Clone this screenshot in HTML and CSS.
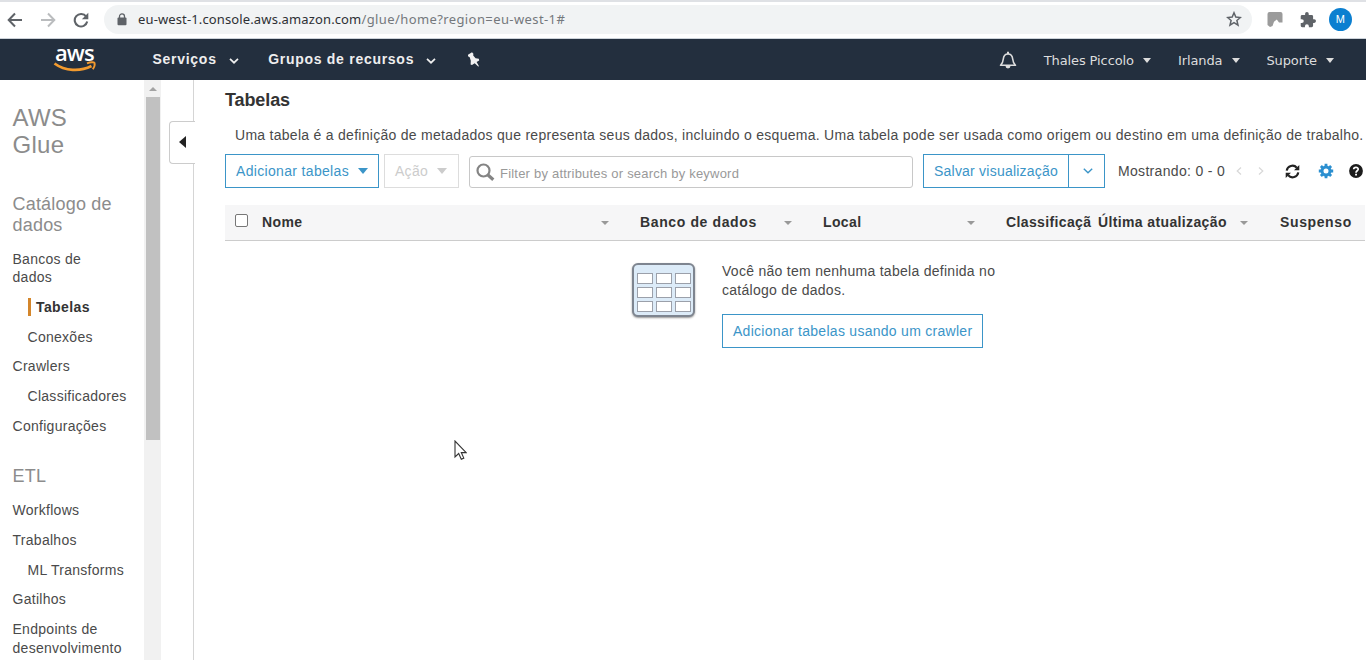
FILE: index.html
```html
<!DOCTYPE html>
<html lang="pt-BR">
<head>
<meta charset="utf-8">
<title>AWS Glue</title>
<link rel="stylesheet" href="styles.css">
</head>
<body>
<div class="chrome">
  <svg class="back" width="16" height="16" viewBox="0 0 16 16" fill="none" stroke="#5f6368" stroke-width="2"><path d="M15 8H2M8 1.5L1.7 8L8 14.5"/></svg>
  <svg class="forward" width="16" height="16" viewBox="0 0 16 16" fill="none" stroke="#babcbe" stroke-width="2"><path d="M1 8h13M8 1.5L14.3 8L8 14.5"/></svg>
  <svg class="reload" width="16" height="16" viewBox="0 0 16 16"><path d="M13.2 4.6A6.3 6.3 0 1 0 14.2 9.6" fill="none" stroke="#5f6368" stroke-width="2.1"/><path d="M15.3 0.8v6.4H8.9z" fill="#5f6368"/></svg>
  <div class="address">
    <svg class="lock" width="10" height="13" viewBox="0 0 10 13"><rect x="0.5" y="4.6" width="9" height="7.6" rx="1" fill="#5f6368"/><path d="M2.5 5V3.4a2.500 2.500 0 0 1 5 0V5" fill="none" stroke="#5f6368" stroke-width="1.300"/></svg>
    <span class="host">eu-west-1.console.aws.amazon.com</span><span class="path">/glue/home?region=eu-west-1#</span>
    <svg class="star" width="16" height="16" viewBox="0 0 16 16" fill="none" stroke="#5f6368" stroke-width="1.500"><path d="M8 1.800l1.800 4.300 4.600.4-3.500 3 1.100 4.600-4-2.400-4 2.400 1.100-4.600-3.500-3 4.600-.4z"/></svg>
  </div>
  <svg class="ext" width="16" height="16" viewBox="0 0 16 16"><path d="M2.500 0h11a2 2 0 0 1 2 2v8.500H12L9.800 7.500 7 9.800 5.500 14 3 15 .5 13V2a2 2 0 0 1 2-2z" fill="#9b9b9b"/></svg>
  <svg class="puzzle" width="16" height="16" viewBox="1 1 22 22"><path d="M20.500 11H19V7a2 2 0 0 0-2-2h-4V3.500a2.500 2.500 0 0 0-5 0V5H4a2 2 0 0 0-2 2v3.800h1.500a2.700 2.700 0 0 1 0 5.400H2V20a2 2 0 0 0 2 2h3.800v-1.500a2.700 2.700 0 0 1 5.400 0V22H17a2 2 0 0 0 2-2v-4h1.500a2.500 2.500 0 0 0 0-5z" fill="#5f6368"/></svg>
  <span class="avatar">M</span>
</div>
<nav class="nav">
  <div class="logo"><span class="logo-text">aws</span>
    <svg class="smile" width="44" height="12" viewBox="0 0 44 12"><path d="M1.500 2.500C12 10.200 27 11 38.500 5" fill="none" stroke="#f29a2e" stroke-width="2.700"/><path d="M34 2.300C37.500.9 41 .9 41.500 1.900C42 3.500 41.400 6 39.800 8.200" fill="none" stroke="#f29a2e" stroke-width="1.900"/></svg>
  </div>
  <span class="menu services">Serviços</span>
  <svg class="chev" width="10" height="6" viewBox="0 0 10 6"><path d="M1 .8l4 3.900L9 .8" fill="none" stroke="#eee" stroke-width="1.700"/></svg>
  <span class="menu groups">Grupos de recursos</span>
  <svg class="chev" width="10" height="6" viewBox="0 0 10 6"><path d="M1 .8l4 3.900L9 .8" fill="none" stroke="#eee" stroke-width="1.700"/></svg>
  <svg class="pin" width="14" height="15" viewBox="0 0 14 15"><path d="M1 2.800L5 .3 6.400 1.700 6.200 3.500 8.600 6.200 11.800 6.800 12.200 8.500 9.600 10 12 14.300 11.200 14.500 7.700 11.200 5 13 3.600 12.400 3.800 8.700 2.700 5.300 1 4.300z" fill="#f2f2f2"/></svg>
  <svg class="bell" width="18" height="18" viewBox="0 0 18 18"><path d="M1.500 14.300c2-1.600 2.500-3 2.800-6.300.3-3.200 1.700-5 4.700-5s4.400 1.800 4.700 5c.3 3.300.8 4.700 2.800 6.300z" fill="none" stroke="#ddd" stroke-width="1.600" stroke-linejoin="round"/><path d="M6.500 15h5a2.500 2.500 0 0 1-5 0zM8 .7h2V3H8z" fill="#ddd"/></svg>
  <span class="user">Thales Piccolo</span><i class="caret"></i>
  <span class="user">Irlanda</span><i class="caret"></i>
  <span class="user">Suporte</span><i class="caret"></i>
</nav>
<div class="body">
  <aside class="side">
    <h1>AWS<br>Glue</h1>
    <h2>Catálogo de<br>dados</h2>
    <ul>
      <li>Bancos de<br>dados</li>
      <li class="sub active">Tabelas</li>
      <li class="sub">Conexões</li>
      <li>Crawlers</li>
      <li class="sub">Classificadores</li>
      <li>Configurações</li>
    </ul>
    <h2 class="etl">ETL</h2>
    <ul>
      <li>Workflows</li>
      <li>Trabalhos</li>
      <li class="sub">ML Transforms</li>
      <li>Gatilhos</li>
      <li>Endpoints de<br>desenvolvimento</li>
    </ul>
  </aside>
  <div class="scroll"><i class="up"></i><i class="thumb"></i></div>
  <div class="gutter"><div class="toggle"><i></i></div></div>
  <main>
    <h3>Tabelas</h3>
    <p class="desc">Uma tabela é a definição de metadados que representa seus dados, incluindo o esquema. Uma tabela pode ser usada como origem ou destino em uma definição de trabalho.</p>
    <div class="tools">
      <div class="btn add"><span>Adicionar tabelas</span><i class="tri"></i></div>
      <div class="btn action"><span>Ação</span><i class="tri"></i></div>
      <div class="search"><svg width="19" height="19" viewBox="0 0 19 19" fill="none" stroke="#848484"><circle cx="7.500" cy="7.500" r="6" stroke-width="2.200"/><path d="M12 12l5.300 4.800" stroke-width="3.200"/></svg><span>Filter by attributes or search by keyword</span></div>
      <div class="btn save"><span>Salvar visualização</span></div>
      <div class="btn more"><svg width="10" height="6" viewBox="0 0 10 6"><path d="M.8.800L5 4.800 9.200.8" fill="none" stroke="#3b95c8" stroke-width="1.400"/></svg></div>
      <span class="count">Mostrando: 0 - 0</span>
      <svg class="prev" width="6" height="8" viewBox="0 0 6 8"><path d="M5 .5L1.200 4 5 7.500" fill="none" stroke="#d8d8d8" stroke-width="1.200"/></svg>
      <svg class="next" width="6" height="8" viewBox="0 0 6 8"><path d="M1 .5L4.800 4 1 7.500" fill="none" stroke="#d8d8d8" stroke-width="1.200"/></svg>
      <svg class="refresh" width="15" height="15" viewBox="0 0 15 15"><path d="M1.700 6.600A5.800 5.800 0 0 1 11.800 3.700M13.300 8.400A5.800 5.800 0 0 1 3.200 11.300" fill="none" stroke="#222" stroke-width="2.100"/><path d="M14.300 1v5.300H9zM.7 14V8.700H6z" fill="#222"/></svg>
      <svg class="gear" width="16" height="16" viewBox="-8 -8 16 16"><circle r="4" fill="none" stroke="#2b8fd0" stroke-width="3"/><path d="M0-7.200V-5M0 7.200V5M-7.200 0H-5M7.200 0H5M-5.100-5.100L-3.600-3.600M5.100 5.100L3.600 3.600M-5.100 5.100L-3.600 3.600M5.100-5.100L3.600-3.600" stroke="#2b8fd0" stroke-width="2.800"/></svg>
      <svg class="help" width="14" height="14" viewBox="0 0 14 14"><circle cx="7" cy="7" r="6.900" fill="#1c1c1c"/><path d="M4.700 5.300C4.800 2.600 9.300 2.800 9.200 5.300 9.100 6.800 7 6.800 7 8.700" fill="none" stroke="#fff" stroke-width="1.700"/><path d="M6.100 9.700h1.900v1.800H6.100z" fill="#fff"/></svg>
    </div>
    <div class="thead">
      <i class="check"></i>
      <div class="c1">Nome<i class="sort"></i></div>
      <div class="c2">Banco de dados<i class="sort"></i></div>
      <div class="c3">Local<i class="sort"></i></div>
      <div class="c4">Classificaçã</div>
      <div class="c5">Última atualização<i class="sort"></i></div>
      <div class="c6">Suspenso</div>
    </div>
    <div class="empty">
      <div class="grid"><i></i><i></i><i></i><i></i><i></i><i></i><i></i><i></i><i></i></div>
      <div class="msg">
        <p>Você não tem nenhuma tabela definida no<br>catálogo de dados.</p>
        <div class="btn crawler"><span>Adicionar tabelas usando um crawler</span></div>
      </div>
    </div>
  </main>
</div>
<svg class="cursor" width="13" height="21" viewBox="0 0 13 21"><path d="M1 1v16l3.700-3.500 2.600 5.700 2.500-1.100-2.500-5.500h4.900z" fill="#fff" stroke="#333" stroke-width="1.100"/></svg>
</body>
</html>
```
FILE: styles.css
```css
* { box-sizing: border-box; }
body { margin: 0; width: 1366px; height: 660px; overflow: hidden; background: #fff; font: 14px "Liberation Sans", Arial, sans-serif; color: #4a4a4a; letter-spacing: .28px; white-space: nowrap; }
h1, h2, h3, p, ul { margin: 0; padding: 0; font-weight: normal; }
svg { display: block; flex: none; }
i { display: block; flex: none; }
.chrome { height: 39px; border-top: 2px solid #dfe1e5; border-bottom: 1px solid #cdd3da; display: flex; align-items: center; padding: 0 0 1px 7px; }
.forward { margin-left: 17px; }
.reload { margin-left: 17px; }
.address { margin-left: 15px; width: 1148px; height: 29px; border-radius: 15px; background: #f1f3f4; display: flex; align-items: center; padding: 0 0 1px 13px; font: 13px "Noto Sans", sans-serif; color: #2d3034; }
.host { margin-left: 11px; letter-spacing: .13px; }
.path { color: #74787c; letter-spacing: .4px; }
.star { margin: 0 10px 0 auto; }
.ext { margin-left: 15px; }
.puzzle { margin-left: 17px; }
.avatar { margin-left: 13px; width: 23px; height: 23px; border-radius: 50%; background: #0b7fd0; color: #fff; font-size: 11px; line-height: 23px; text-align: center; }
.nav { height: 41px; background: #232f3e; display: flex; align-items: center; padding-left: 53px; color: #eee; }
.logo { width: 44px; height: 41px; }
.logo-text { display: block; font: 600 22px/26px "Open Sans", sans-serif; letter-spacing: -.9px; color: #fff; padding-left: 2px; }
.smile { margin-top: -4px; }
.menu { font-weight: bold; font-size: 14px; letter-spacing: .72px; margin-bottom: 1px; }
.services { margin-left: 55.500px; }
.chev { margin: 3px 0 0 12px; }
.groups { margin-left: 29.500px; }
.pin { margin-left: 31px; }
.bell { margin: 1px 0 0 518px; }
.user { font: 13px "DejaVu Sans", sans-serif; letter-spacing: -.1px; color: #ddd; margin: 2px 0 0 26.500px; }
.caret { border: 4px solid transparent; border-top: 5px solid #ddd; border-bottom: 0; margin: 2px 0 0 9.500px; }
.body { display: flex; height: 580px; overflow: hidden; }
.side { width: 144px; padding: 24px 0 0 12.500px; flex: none; }
.side h1 { font-size: 24px; line-height: 27px; color: #8c8c8c; }
.side h2 { font-size: 18px; line-height: 21px; color: #8c8c8c; margin: 36px 0 13.500px; letter-spacing: .2px; }
.side .etl { margin-top: 31px; }
.side ul { list-style: none; display: flex; flex-direction: column; gap: 11.300px; line-height: 18.500px; }
.sub { padding-left: 15px; }
.side .active { border-left: 3px solid #d4862b; margin-left: 15px; padding-left: 5.500px; font-weight: bold; color: #333; letter-spacing: .4px; }
.scroll { width: 17px; background: #f1f1f1; flex: none; }
.up { border: 4px solid transparent; border-bottom: 4px solid #a3a3a3; border-top: 0; margin: 7px 4px 6px 5px; width: 8px; }
.thumb { width: 14px; height: 343px; margin-left: 2px; background: #c1c1c1; }
.gutter { width: 33px; border-right: 1px solid #d5d5d5; flex: none; padding-top: 41px; }
.toggle { width: 26px; height: 43px; margin-left: 8px; border: 1px solid #ccc; border-right: 0; border-radius: 4px 0 0 4px; background: #fff; padding: 14px 0 0 9px; }
.toggle i { border: 6px solid transparent; border-right: 7px solid #222; border-left: 0; width: 7px; }
main { flex: none; padding-left: 31px; width: 1172px; }
h3 { font-size: 18px; line-height: 20px; margin-top: 10px; color: #333; font-weight: bold; letter-spacing: -.1px; }
.desc { padding-left: 10px; margin-top: 15px; line-height: 20px; }
.tools { display: flex; margin-top: 9px; height: 34px; align-items: center; }
.btn { border: 1px solid #3b95c8; color: #3b95c8; height: 34px; display: flex; align-items: center; padding-left: 10px; flex: none; }
.tri { border: 5px solid transparent; border-top: 6px solid #3b95c8; border-bottom: 0; margin-left: auto; }
.add { width: 154px; padding-right: 10px; letter-spacing: .33px; }
.action { width: 75px; margin-left: 5px; color: #ccc; border-color: #ddd; padding-right: 11px; }
.action .tri { border-top-color: #ccc; }
.search { width: 444px; height: 32px; margin: 2px 0 0 10px; border: 1px solid #c8c8c8; border-radius: 3px; display: flex; align-items: center; padding-left: 6px; color: #999; flex: none; font-size: 13px; letter-spacing: .21px; }
.search span { margin-left: 5px; padding-top: 2px; }
.save { width: 146px; margin-left: 10px; letter-spacing: .22px; }
.more { width: 37px; margin-left: -1px; padding-left: 14px; }
.count { margin-left: 13px; letter-spacing: .32px; }
.prev { margin-left: 11px; }
.next { margin-left: 16px; }
.refresh { margin-left: 21px; }
.gear { margin-left: 18px; }
.help { margin-left: 15px; }
.thead { margin-top: 17px; height: 36px; background: #f6f6f7; border-bottom: 1px solid #ccc; display: flex; align-items: center; font-weight: bold; color: #333; width: 1140px; padding-bottom: 2px; letter-spacing: .37px; }
.check { width: 13px; height: 13px; border: 1px solid #777; border-radius: 2px; background: #fff; margin: -2px 0 0 10px; }
.thead div { display: flex; align-items: center; flex: none; }
.sort { border: 4px solid transparent; border-top: 4px solid #999; border-bottom: 0; margin: 2px 0 0 auto; }
.c1 { width: 347px; margin-left: 14px; }
.c2 { width: 152px; margin-left: 31px; letter-spacing: .62px; }
.c3 { width: 152px; margin-left: 31px; }
.c4 { width: 86px; margin-left: 31px; }
.c5 { width: 150px; margin-left: 6px; }
.c6 { margin-left: 32px; letter-spacing: .62px; }
.empty { display: flex; padding: 22px 0 0 407px; }
.grid { width: 63px; height: 54px; border: 2px solid #7e8590; border-radius: 6px; background: #dcebf8; box-shadow: 0 1px 2px #999; display: grid; grid-template-columns: repeat(3, 16px); grid-template-rows: repeat(3, 11px); gap: 3px; padding: 8px 0 0 3px; }
.grid i { border: 1px solid #9ba0aa; background: #fff; }
.msg { margin: -1px 0 0 27px; line-height: 18.500px; }
.crawler { width: 261px; margin-top: 15px; }
.cursor { position: absolute; left: 454px; top: 440px; }
```
